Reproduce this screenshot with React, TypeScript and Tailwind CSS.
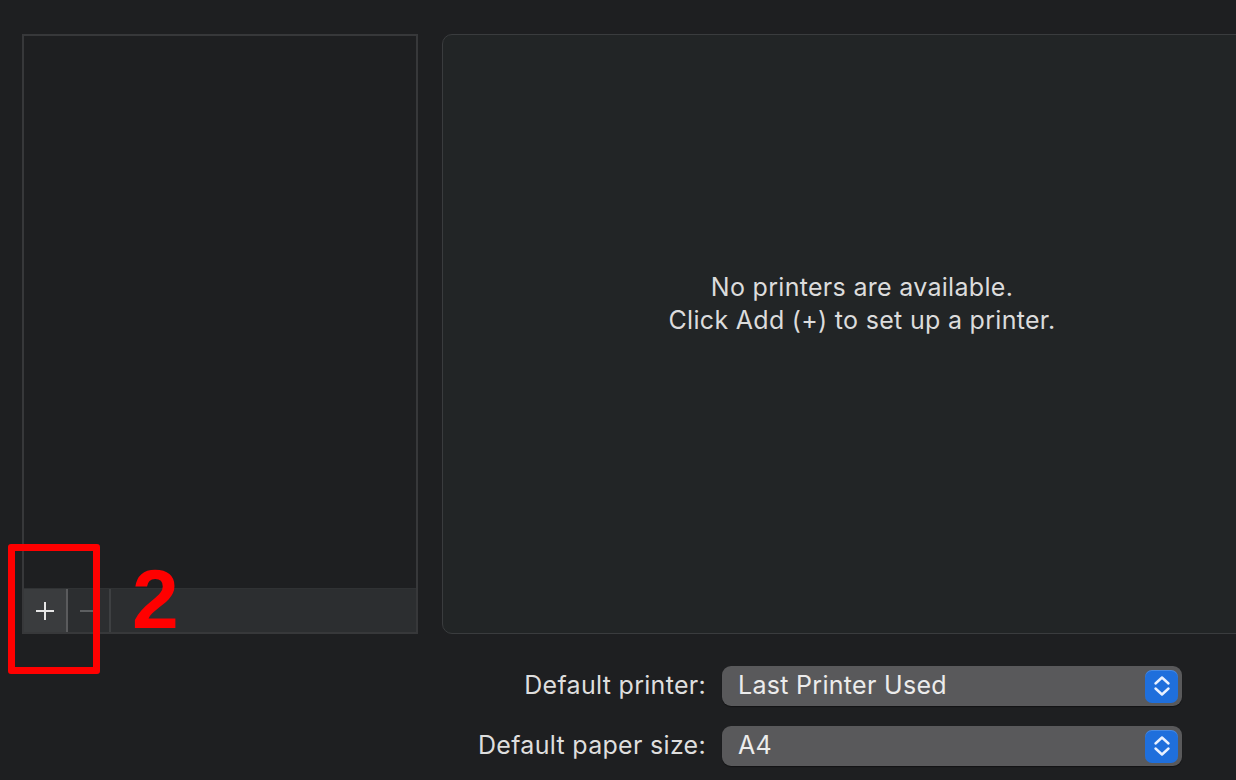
import React from "react";

const Stepper = () => (
  <div className="w-[33px] h-[33px] rounded-[7px] bg-[#1f6fdc] flex items-center justify-center shadow-[inset_0_1px_0_rgba(255,255,255,0.18)]">
    <svg width="18" height="26" viewBox="0 0 18 26" fill="none" stroke="#e9f1ff" strokeWidth="2.4" strokeLinecap="round" strokeLinejoin="round">
      <path d="M2.5 10.5 9 4.5l6.5 6" />
      <path d="M2.5 15.5 9 21.5l6.5-6" />
    </svg>
  </div>
);

const SelectRow = ({ label, value }: { label: string; value: string }) => (
  <div className="flex items-center">
    <div className="w-[722px] shrink-0 text-right pr-[16px] text-[25px] tracking-[0.3px] text-[#dedede]">{label}</div>
    <div className="w-[460px] shrink-0 h-[40px] rounded-[9px] bg-[#59595b] flex items-center justify-between pl-[16px] pr-[4px] shadow-[0_1px_1px_rgba(0,0,0,0.4)]">
      <span className="text-[25px] tracking-[0.3px] text-[#ececec]">{value}</span>
      <Stepper />
    </div>
  </div>
);

export default function App() {
  return (
    <div className="w-[1236px] h-[780px] overflow-hidden bg-[#1e1f21] font-['Inter',sans-serif] relative">
      <div className="flex pt-[34px] pl-[22px] gap-[24px]">
        {/* Printer list */}
        <div className="w-[396px] shrink-0 h-[600px] border-2 border-[#37383a] flex flex-col">
          <div className="flex-1" />
          <div className="h-[44px] bg-[#2c2e30] border-t border-[#303234] flex">
            <div className="w-[44px] bg-[#3a3c3e] border-r-2 border-[#5a5b5d] flex items-center justify-center">
              <svg width="20" height="20" viewBox="0 0 20 20" stroke="#e6e6e6" strokeWidth="2">
                <path d="M10 1v18M1 10h18" />
              </svg>
            </div>
            <div className="w-[43px] border-r-2 border-[#3e4042] flex items-center justify-center">
              <svg width="20" height="4" viewBox="0 0 20 4" stroke="#5d5f61" strokeWidth="2">
                <path d="M1 2h18" />
              </svg>
            </div>
          </div>
        </div>

        {/* Detail pane */}
        <div className="w-[840px] shrink-0 h-[600px] rounded-[10px] bg-[#222526] border border-[#3a3c3e] flex flex-col items-center justify-center pb-[60px]">
          <p className="text-[25px] tracking-[0.3px] leading-[33px] text-[#dcdcdc] text-center">
            No printers are available.
            <br />
            Click Add (+) to set up a printer.
          </p>
        </div>
      </div>

      <div className="flex flex-col gap-[20px] mt-[32px]">
        <SelectRow label="Default printer:" value="Last Printer Used" />
        <SelectRow label="Default paper size:" value="A4" />
      </div>

      {/* Annotation overlay */}
      <div className="absolute left-[8px] top-[544px] w-[92px] h-[130px] border-[7px] border-[#ff0000] rounded-[3px]" />
      <div className="absolute left-[132px] top-[557px] text-[#ff0000] text-[84px] font-bold leading-none font-['Liberation_Sans',sans-serif]">
        2
      </div>
    </div>
  );
}
